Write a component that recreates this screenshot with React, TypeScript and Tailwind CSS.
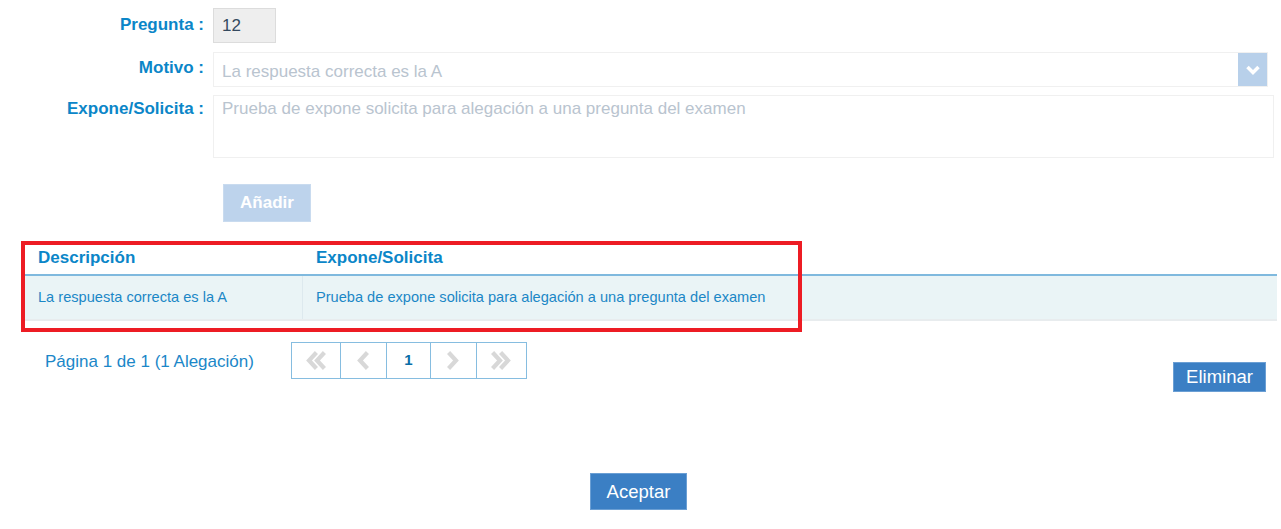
const font = { fontFamily: '"Liberation Sans", Arial, sans-serif' }

function Chevron({ dir, double }: { dir: 'left' | 'right'; double?: boolean }) {
    const one = dir === 'left' ? 'M11 4 L5 10.5 L11 17' : 'M5 4 L11 10.5 L5 17'
    const two = dir === 'left' ? 'M19 4 L13 10.5 L19 17' : 'M13 4 L19 10.5 L13 17'
    return (
        <svg width={double ? 24 : 16} height="21" viewBox={double ? '0 0 24 21' : '0 0 16 21'}>
            <path d={one} fill="none" stroke="#d8d8d8" strokeWidth="4.2" strokeLinecap="square" />
            {double && <path d={two} fill="none" stroke="#d8d8d8" strokeWidth="4.2" strokeLinecap="square" />}
        </svg>
    )
}

function Label({ children, pad }: { children: string; pad: string }) {
    return (
        <div className={`w-[204px] shrink-0 text-right text-[17px] leading-[25px] font-bold text-[#0b86c8] ${pad}`}>
            {children}
        </div>
    )
}

export default function App() {
    return (
        <div className="relative w-[1281px] h-[529px] bg-white" style={font}>
            <div className="pt-2">
                <div className="flex items-start">
                    <Label pad="pt-[4px]">Pregunta :</Label>
                    <div className="ml-[9px] w-[63px] h-[35px] bg-[#eeeeee] border border-[#dcdcdc] px-2 pt-[4px] text-[17px] leading-[25px] text-[#34495e]">
                        12
                    </div>
                </div>
                <div className="flex items-start mt-[9px]">
                    <Label pad="pt-[3px]">Motivo :</Label>
                    <div className="ml-[9px] w-[1055px] h-[35px] border border-[#f0f0f0] flex items-center justify-between pl-2">
                        <span className="pt-[4px] text-[17px] leading-[25px] text-[#b9c4cf]">La respuesta correcta es la A</span>
                        <div className="w-[29px] h-[33px] bg-[#b8d0ea] flex items-center justify-center">
                            <svg width="16" height="12" viewBox="0 0 16 12">
                                <path d="M2.5 3 L8 8.5 L13.5 3" fill="none" stroke="white" strokeWidth="3.5" />
                            </svg>
                        </div>
                    </div>
                </div>
                <div className="flex items-start mt-[8px]">
                    <Label pad="pt-[1px]">Expone/Solicita :</Label>
                    <div className="ml-[9px] w-[1061px] h-[63px] border border-[#f0f0f0] px-2 text-[17px] leading-[25px] text-[#b9c4cf]">
                        Prueba de expone solicita para alegación a una pregunta del examen
                    </div>
                </div>
                <div className="ml-[223px] mt-[26px] w-[88px] h-[38px] bg-[#bdd3ec] border border-[#c9dbef] flex items-center justify-center text-[17px] font-bold text-white">
                    Añadir
                </div>
            </div>

            <div className="ml-[25px] mt-[23px] w-[1252px]">
                <div className="flex h-[29px] items-center pb-[3px] text-[17px] font-bold text-[#0b86c8]">
                    <div className="w-[278px] pl-[13px]">Descripción</div>
                    <div className="pl-[13px]">Expone/Solicita</div>
                </div>
                <div className="h-[2px] bg-[#7fb9de]" />
                <div className="flex h-[45px] items-center bg-[#eaf4f6] text-[14.6px] text-[#1b87c6] border-b-2 border-[#e8ecee]">
                    <div className="w-[278px] h-full flex items-center pl-[13px] border-r border-[#dde9ee]">La respuesta correcta es la A</div>
                    <div className="pl-[13px]">Prueba de expone solicita para alegación a una pregunta del examen</div>
                </div>
            </div>

            <div className="absolute left-[21px] top-[241px] w-[781px] h-[91px] border-4 border-[#ed1c24]" />

            <div className="flex items-start mt-[21px]">
                <div className="ml-[45px] mt-[7px] text-[17px] text-[#1b87c8]">Página 1 de 1 (1 Alegación)</div>
                <div className="ml-[37px] flex border border-[#86bde0]">
                    <div className="w-[49px] h-[35px] flex items-center justify-center border-r border-[#86bde0]"><Chevron dir="left" double /></div>
                    <div className="w-[46px] h-[35px] flex items-center justify-center border-r border-[#86bde0]"><Chevron dir="left" /></div>
                    <div className="w-[44px] h-[35px] flex items-center justify-center border-r border-[#86bde0] text-[15px] font-bold text-[#0a6ea8]">1</div>
                    <div className="w-[46px] h-[35px] flex items-center justify-center border-r border-[#86bde0]"><Chevron dir="right" /></div>
                    <div className="w-[49px] h-[35px] flex items-center justify-center"><Chevron dir="right" double /></div>
                </div>
                <div className="ml-auto mr-[15px] mt-[20px] w-[93px] h-[30px] bg-[#3b7fc4] border border-[#6b9fd4] flex items-center justify-center text-[18.5px] text-white">
                    Eliminar
                </div>
            </div>

            <div className="flex justify-center mt-[81px] pr-[4px]">
                <div className="w-[97px] h-[37px] bg-[#3b7fc4] border border-[#6b9fd4] flex items-center justify-center text-[18.5px] text-white">
                    Aceptar
                </div>
            </div>
        </div>
    )
}
